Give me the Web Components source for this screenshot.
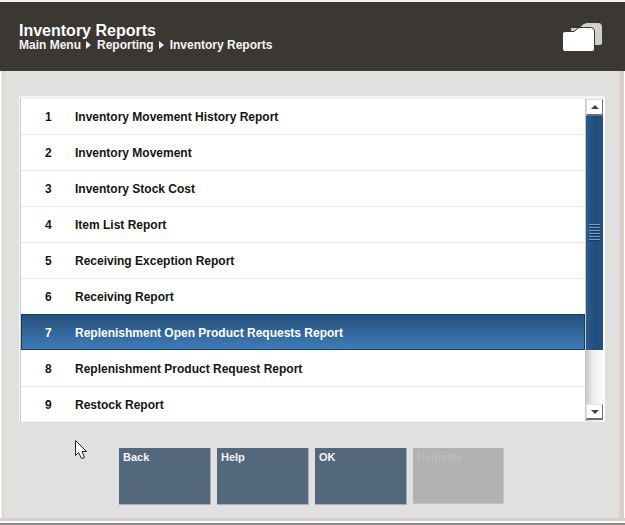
<!DOCTYPE html>
<html><head><meta charset="utf-8">
<style>
html,body{margin:0;padding:0;background:#fff}
body{width:625px;height:525px;overflow:hidden;font-family:"Liberation Sans",Arial,sans-serif}
</style></head><body>
<pos-screen>
  <pos-header slot="header" title="Inventory Reports" crumbs="Main Menu|Reporting|Inventory Reports"></pos-header>
  <pos-list>
    <pos-row num="1" label="Inventory Movement History Report"></pos-row>
    <pos-row num="2" label="Inventory Movement"></pos-row>
    <pos-row num="3" label="Inventory Stock Cost"></pos-row>
    <pos-row num="4" label="Item List Report"></pos-row>
    <pos-row num="5" label="Receiving Exception Report"></pos-row>
    <pos-row num="6" label="Receiving Report"></pos-row>
    <pos-row num="7" label="Replenishment Open Product Requests Report" selected></pos-row>
    <pos-row num="8" label="Replenishment Product Request Report"></pos-row>
    <pos-row num="9" label="Restock Report" last></pos-row>
  </pos-list>
  <pos-actions>
    <pos-cursor></pos-cursor>
    <pos-button>Back</pos-button>
    <pos-button>Help</pos-button>
    <pos-button>OK</pos-button>
    <pos-button disabled>Register</pos-button>
  </pos-actions>
</pos-screen>
<script>
function def(name,css,html){
  customElements.define(name,class extends HTMLElement{
    connectedCallback(){
      if(this.shadowRoot)return;
      const r=this.attachShadow({mode:"open"});
      r.innerHTML="<style>"+css+"</style>"+(typeof html==="function"?html(this):html);
    }
  });
}
def("pos-screen",`:host{display:flex;flex-direction:column;width:625px;height:525px;box-sizing:border-box;border-top:2px solid #f4f2f0;position:relative;background:#fff}
.main{flex:1;display:flex;flex-direction:column;padding:26px 20px 0 20px;background:linear-gradient(90deg,#fff 0,#fff 1px,#ddd6d0 2px,#e0dcd8 5px,#e0e0e0 6px,#e0e0e0 619px,#d8cfc8 620px,#d8cfc8 624px,#fff 624px)}
.foot{height:7px;flex:none;box-sizing:border-box;background:#fff;border-top:3px solid #d8cfc8;padding-top:2px}
.foot i{display:block;height:2px;background:#8a8a8a}`,
`<slot name="header"></slot><div class="main"><slot></slot></div><div class="foot"><i></i></div>`);
def("pos-header",`:host{display:flex;align-items:flex-start;justify-content:space-between;height:69px;box-sizing:border-box;background:#3b3733;color:#fff;padding:21px 22px 0 19px;flex:none}
h1{margin:0;font:bold 16px/15px "Liberation Sans",Arial,sans-serif}
.c{display:flex;align-items:center;font:bold 12px/14px "Liberation Sans",Arial,sans-serif;color:#f4f4f4}
.t{width:0;height:0;border-left:5px solid #eee;border-top:4.5px solid transparent;border-bottom:4.5px solid transparent;margin:0 6px 0 5px}
svg{display:block;margin-top:-1px}`,
h=>{const cs=h.getAttribute("crumbs").split("|");return `<div><h1>${h.getAttribute("title")}</h1><div class="c">${cs.map(c=>`<span>${c}</span>`).join('<i class="t"></i>')}</div></div>
<svg width="40" height="30" viewBox="0 0 40 30"><path fill="#cfcfcf" d="M8 6 H17 Q20 1 25 1 H35 Q39 1 39 5 V21 Q39 23 37 23 H31 V12 H8 Z"/><path fill="#fff" stroke="#3b3733" stroke-width="1" d="M-0.5 11.5 Q-0.5 9.5 2 9.5 H10 Q12 9.5 13 8 Q14.5 5.5 17 5.5 H27 Q31.5 5.5 31.5 10 V27 Q31.5 29.5 29 29.5 H2 Q-0.5 29.5 -0.5 27 Z"/></svg>`});
def("pos-list",`:host{display:flex;height:325px;flex:none;box-sizing:border-box;background:#fff;border-top:2px solid #f2f2f2;border-left:1px solid #c4c6cc;padding-right:2px;border-bottom:1px solid #f2f2f2;box-shadow:-1px -1px 0 #f6f6f6}
.rows{flex:1;display:flex;flex-direction:column;min-width:0;overflow:hidden}
.sb{width:18px;flex:none;display:flex;flex-direction:column;background:linear-gradient(90deg,#c4c4c4,#eeeeee 45%,#fbfbfb);box-sizing:border-box}
.btn{height:17px;flex:none;box-sizing:border-box;background:#fff;border:1px solid;border-color:#e0e0e0 #6e6e6e #6e6e6e #e0e0e0;border-bottom-width:2px;margin-left:1px;margin-right:0;display:flex;align-items:center;justify-content:center}
.dn{height:16px;margin-bottom:1px}
.a{width:0;height:0;border-left:4px solid transparent;border-right:4px solid transparent}
.a.u{border-bottom:4px solid #444}.a.d{border-top:4px solid #444}
.thumb{height:234px;flex:none;box-sizing:border-box;padding-bottom:2px;background:linear-gradient(90deg,#2d5c8c,#1f4d7c 50%,#25527f);display:flex;flex-direction:column;align-items:center;justify-content:center;gap:2px;margin-left:1px}
.thumb i{display:block;width:11px;height:1px;background:#7a9ab8;box-shadow:0 1px 0 #1a3c60}
.fill{flex:1}`,
`<div class="rows"><slot></slot></div><div class="sb"><div class="btn"><span class="a u"></span></div><div class="thumb"><i></i><i></i><i></i><i></i><i></i><i></i></div><div class="fill"></div><div class="btn dn"><span class="a d"></span></div></div>`);
def("pos-row",`:host{display:flex;align-items:center;height:36px;flex:none;box-sizing:border-box;border-bottom:1px solid #e8e8e8;font:bold 12px "Liberation Sans",Arial,sans-serif;color:#151515}
:host([selected]){background:linear-gradient(180deg,#264f7c,#3f7cb8);color:#fff;border:1px solid #12406c;margin-top:-1px;margin-bottom:1px;padding-top:2px}
:host([last]){border-bottom:0}
.n{width:54px;box-sizing:border-box;padding-left:24px;flex:none}
:host([selected]) .n{width:53px;padding-left:23px}`,
h=>`<span class="n">${h.getAttribute("num")}</span><span>${h.getAttribute("label")}</span>`);
def("pos-actions",`:host{display:flex;gap:6px;padding:26px 0 0 99px;position:relative}`,`<slot></slot>`);
def("pos-button",`:host{display:block;width:92px;height:57px;box-sizing:border-box;background:#54687d;color:#f4f4f4;border-right:1px solid #a8aeb4;border-bottom:1px solid #a8aeb4;font:bold 11px "Liberation Sans",Arial,sans-serif;padding:3px 4px}
:host([disabled]){background:#b2b2b2;color:#bdbdbd;border-color:#c4c4c4;width:91px;height:56px}`,`<slot></slot>`);
def("pos-cursor",`:host{position:absolute;left:55px;top:18px;width:14px;height:20px}svg{display:block}`,
`<svg width="14" height="20" viewBox="0 0 14 20"><path fill="#fff" stroke="#222" stroke-width="1" d="M0.5 0.5 V15.5 L3.5 12.5 L6.5 18.5 L9.5 17.5 L7 11.5 H11.5 Z"/></svg>`);
</script>
</body></html>
